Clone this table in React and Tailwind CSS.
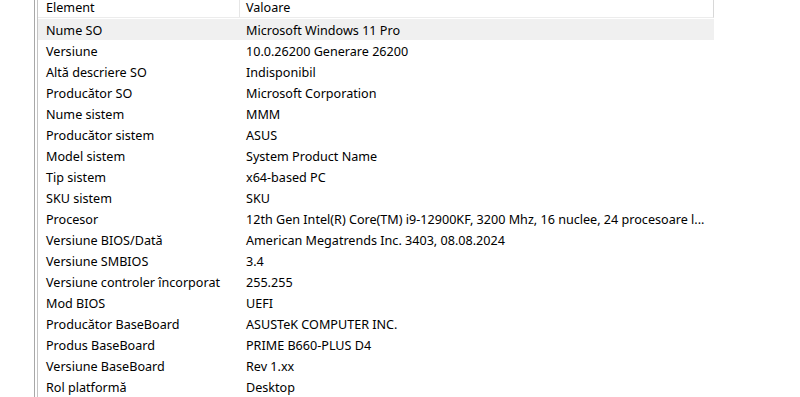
import React from "react";

const rows = [
  ["Nume SO", "Microsoft Windows 11 Pro"],
  ["Versiune", "10.0.26200 Generare 26200"],
  ["Altă descriere SO", "Indisponibil"],
  ["Producător SO", "Microsoft Corporation"],
  ["Nume sistem", "MMM"],
  ["Producător sistem", "ASUS"],
  ["Model sistem", "System Product Name"],
  ["Tip sistem", "x64-based PC"],
  ["SKU sistem", "SKU"],
  ["Procesor", "12th Gen Intel(R) Core(TM) i9-12900KF, 3200 Mhz, 16 nuclee, 24 procesoare l..."],
  ["Versiune BIOS/Dată", "American Megatrends Inc. 3403, 08.08.2024"],
  ["Versiune SMBIOS", "3.4"],
  ["Versiune controler încorporat", "255.255"],
  ["Mod BIOS", "UEFI"],
  ["Producător BaseBoard", "ASUSTeK COMPUTER INC."],
  ["Produs BaseBoard", "PRIME B660-PLUS D4"],
  ["Versiune BaseBoard", "Rev 1.xx"],
  ["Rol platformă", "Desktop"],
];

export default function App() {
  return (
    <div
      className="w-[800px] h-[397px] bg-white overflow-hidden flex text-black text-[12.6px]"
      style={{ fontFamily: '"Noto Sans", "Open Sans", sans-serif' }}
    >
      <div className="ml-[34px] h-full border-l border-[#a8a8a8]" />
      <div className="ml-[2px] h-full border-l border-[#c4c4c4]" />
      <div className="w-[676px] flex flex-col">
        <div className="flex h-[18px] border-b border-[#ececec] border-r border-r-[#d8d8d8]">
          <div className="w-[202px] pl-[8px] pt-[1px] leading-[14px] border-r border-[#e6e6e6]">Element</div>
          <div className="flex-1 pl-[6px] pt-[1px] leading-[14px]">Valoare</div>
        </div>
        <div className="mt-[1px] flex flex-col">
          {rows.map(([k, v], i) => (
            <div
              key={k}
              className={`flex h-[21px] items-center whitespace-nowrap ${i === 0 ? "bg-[#f0f0f0]" : ""}`}
            >
              <div className="w-[202px] pl-[8px] pt-[4px] overflow-hidden">{k}</div>
              <div className="flex-1 pl-[6px] pt-[4px] overflow-hidden">{v}</div>
            </div>
          ))}
        </div>
      </div>
    </div>
  );
}
